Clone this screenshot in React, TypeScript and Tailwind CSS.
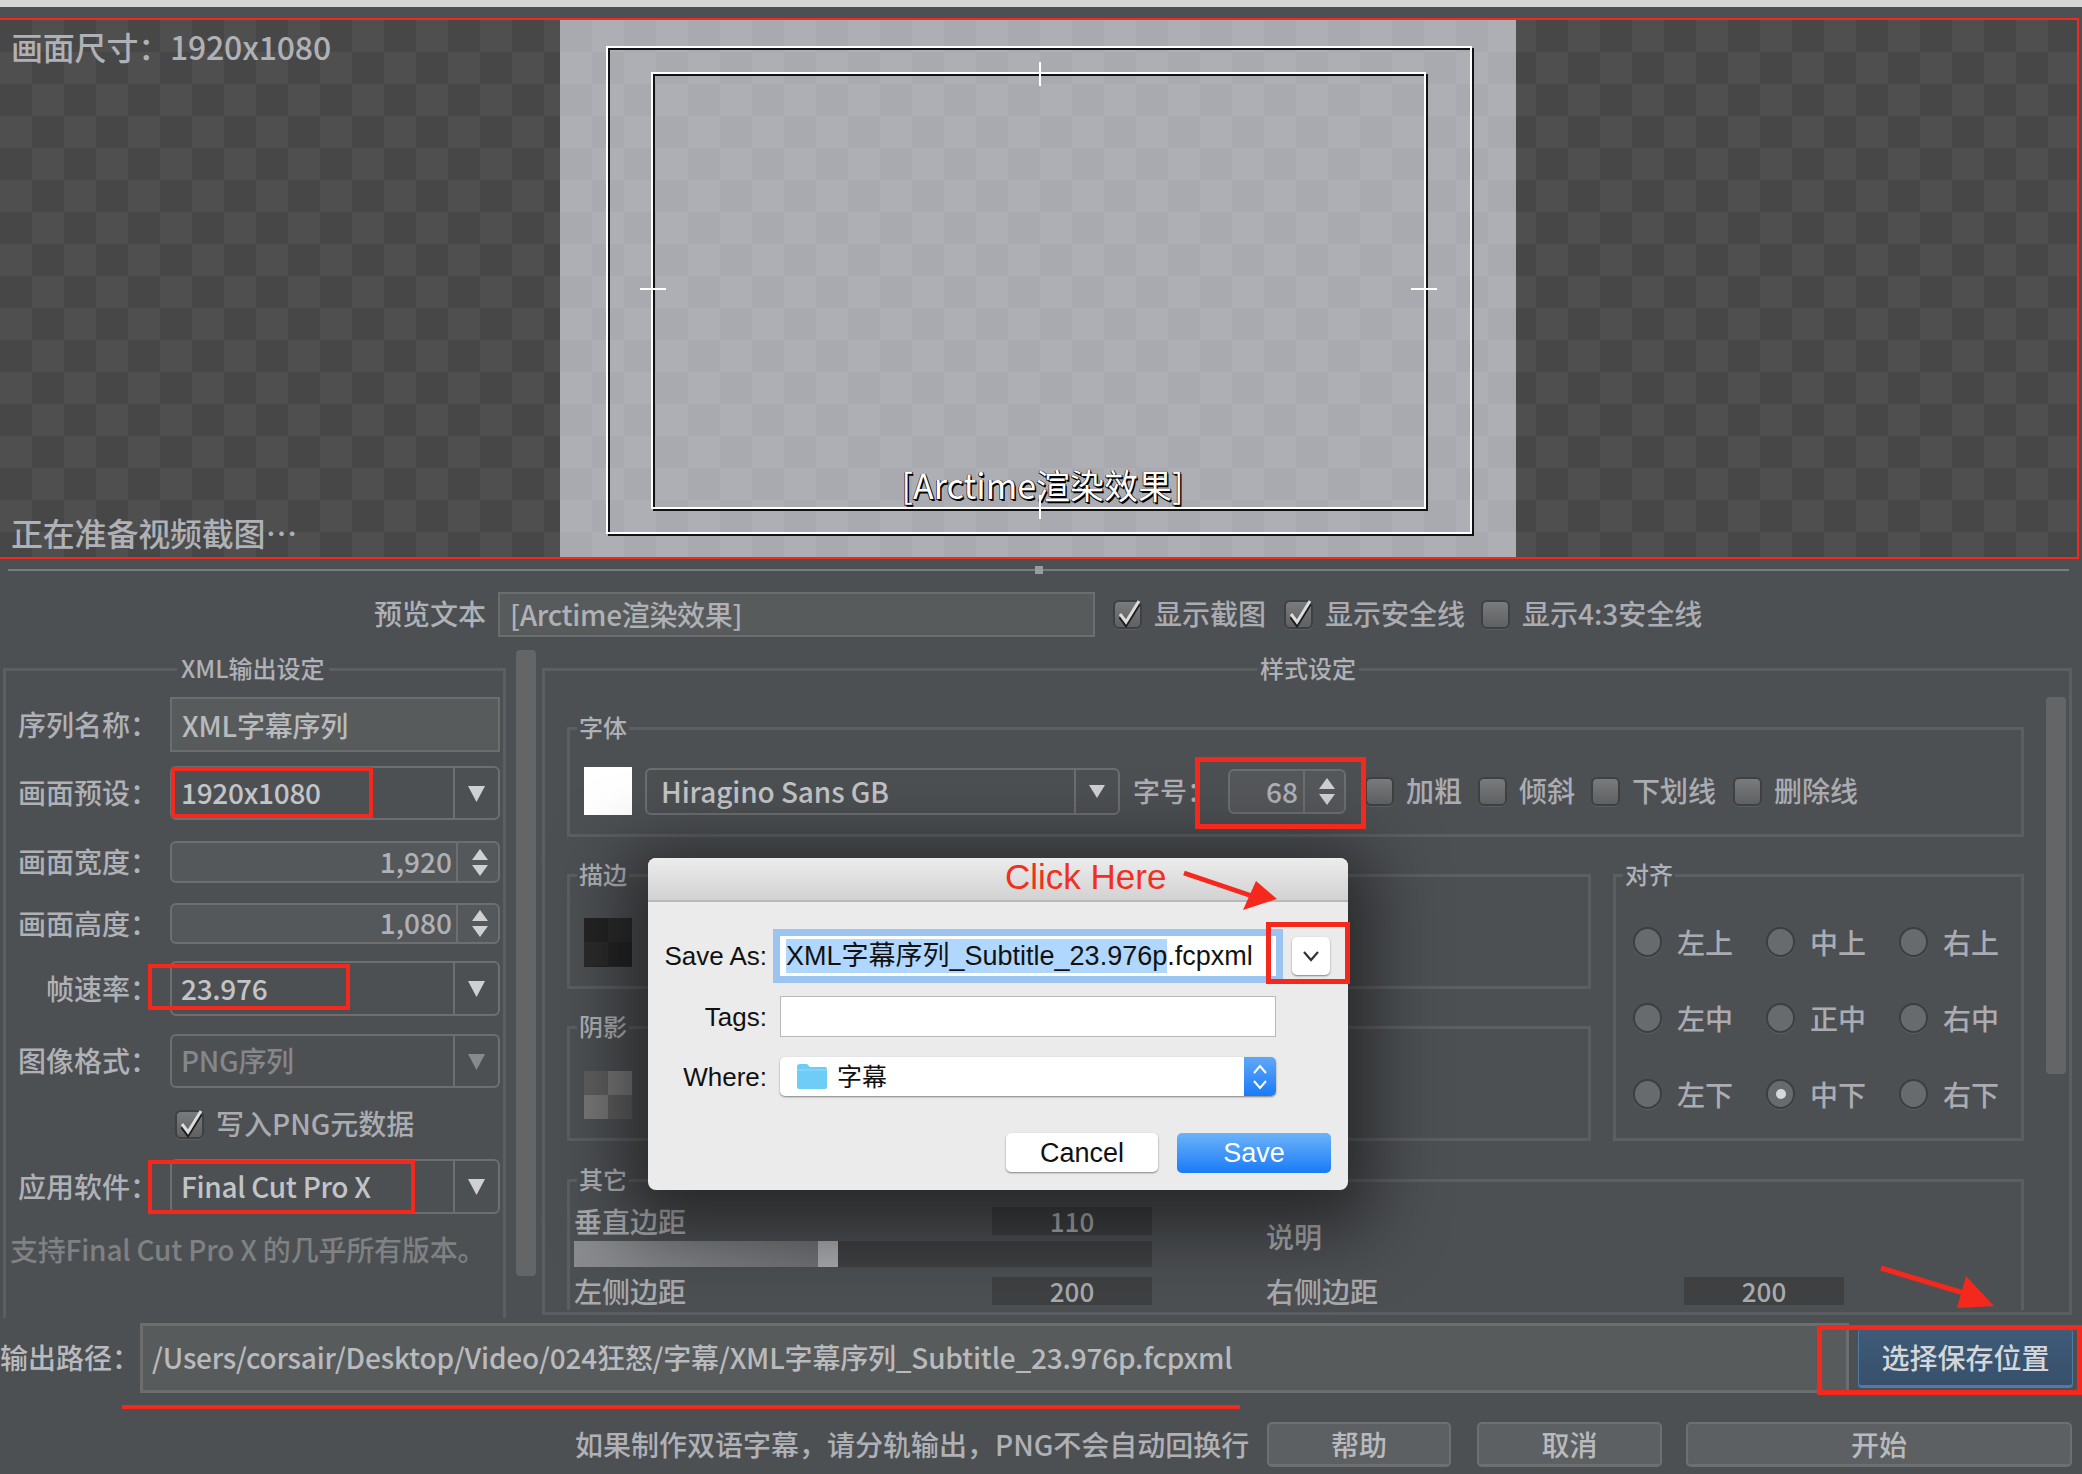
import React from "react";

const Tri = ({ up = false, dim = false, w = 17, h = 16 }: { up?: boolean; dim?: boolean; w?: number; h?: number }) => (
  <svg width={w} height={h} viewBox="0 0 20 17" preserveAspectRatio="none">
    <polygon points={up ? "10,0 20,17 0,17" : "0,0 20,0 10,17"} fill={dim ? "#87898b" : "#cfd0d2"} />
  </svg>
);

const Combo = ({ value, dim = false, h = "h-[54px]" }: { value: string; dim?: boolean; h?: string }) => (
  <div className={`flex w-[330px] ${h} rounded-[6px] border-2 border-[#6c6e70]`}>
    <div className={`flex-1 pl-[9px] pb-[2px] flex items-center text-[28px] leading-[34px] tracking-[-0.3px] ${dim ? "text-[#85878a]" : "text-[#c3c4c7]"}`}>{value}</div>
    <div className="w-[45px] border-l-2 border-[#6c6e70] flex items-center justify-center pt-[1px]">
      <Tri dim={dim} />
    </div>
  </div>
);

const Spin = ({ value, h = "h-[42px]" }: { value: string; h?: string }) => (
  <div className={`flex w-[330px] ${h} rounded-[6px] border-2 border-[#6c6e70] bg-[#55585a]`}>
    <div className="flex-1 pr-[4px] pb-[3px] flex items-center justify-end text-[28px] leading-[34px] text-[#b0b1b6]">{value}</div>
    <div className="w-[42px] pl-[4px] border-l-2 border-[#6c6e70] flex flex-col items-center justify-center gap-[5px]">
      <Tri up w={16} h={11} />
      <Tri w={16} h={11} />
    </div>
  </div>
);

const Row = ({ label, children, mt }: { label: string; children: React.ReactNode; mt: string }) => (
  <div className={`flex items-center ${mt}`}>
    <div className="w-[152px] mr-[12px] pb-[2px] text-right text-[28px] leading-none text-[#b0b1b6]">{label}</div>
    {children}
  </div>
);

const Check = ({ label, checked = false, ml = "" }: { label: string; checked?: boolean; ml?: string }) => (
  <div className={`flex items-center gap-[12px] ${ml}`}>
    <div className="relative shrink-0 w-[29px] h-[29px] rounded-[6px] border-2 border-[#3e4042] bg-[linear-gradient(#7a7b7c,#5f6061)] shadow-[0_1px_0_#5c5e60]">
      {checked && (
        <svg className="absolute -left-[1px] -top-[4px]" width="30" height="30" viewBox="0 0 30 30">
          <path d="M6 17 L12 25 L25 4" fill="none" stroke="#1c1c1c" strokeWidth="3.5" transform="translate(0 2)" />
          <path d="M6 16 L12 24 L25 3" fill="none" stroke="#dcdcdc" strokeWidth="3" />
        </svg>
      )}
    </div>
    <span className="pb-[3px] text-[28px] leading-none text-[#abacb2] whitespace-nowrap">{label}</span>
  </div>
);

const Radio = ({ label, on = false }: { label: string; on?: boolean }) => (
  <div className="flex shrink-0 items-center w-[133px] gap-[15px]">
    <div className="w-[29px] h-[30px] rounded-full border-2 border-[#3c3e41] bg-[#686b6e] flex items-center justify-center shadow-[0_1px_0_#5c5e60]">
      {on && <div className="w-[10px] h-[10px] rounded-full bg-[#d8d8d8]" />}
    </div>
    <span className="text-[28px] leading-none text-[#abacb2]">{label}</span>
  </div>
);

const Group = ({ legend, className, children }: { legend: string; className: string; children?: React.ReactNode }) => (
  <div className={`relative border-[3px] border-[#5c5f62] ${className}`}>
    <span className="absolute left-[7px] -top-[20px] px-[2px] bg-[#4d5053] text-[24px] leading-[34px] text-[#b0b1b6]">{legend}</span>
    {children}
  </div>
);

const Val = ({ v }: { v: string }) => (
  <div className="w-[160px] h-[28px] bg-[#3e4042] flex items-center justify-center text-[26px] leading-[28px] text-[#a9aaad]">{v}</div>
);

const Btn = ({ label, w, ml = "" }: { label: string; w: string; ml?: string }) => (
  <div className={`${w} ${ml} h-[45px] rounded-[5px] border-2 border-[#6d6f71] border-b-[3px] bg-[#5d6062] flex items-center justify-center text-[28px] leading-[34px] text-[#b9babd]`}>{label}</div>
);

const Frame = "border-2 border-white shadow-[2px_2px_0_#111,inset_2px_2px_0_#111]";

export default function App() {
  return (
    <div className="relative w-[2082px] h-[1474px] overflow-hidden bg-[#4d5053] font-medium font-['Noto_Sans_CJK_SC',sans-serif]">
      <div className="h-[7px] bg-[#d6d6d6]" />
      <div className="h-[11px]" />

      {/* preview */}
      <div className="flex w-[2079px] h-[541px] border-y-2 border-r-2 border-[#f5281e] bg-[conic-gradient(#4f4f4f_25%,#474747_0_50%,#4f4f4f_0_75%,#474747_0)] bg-size-[64px_64px]">
        <div className="w-[560px] flex flex-col justify-between pl-[11px] pt-[6px] pb-[5px] text-[32px] leading-[40px] tracking-[-0.2px] text-[#b0b1b6]">
          <div>画面尺寸：1920x1080</div>
          <div>正在准备视频截图…</div>
        </div>
        <div className="w-[956px] pl-[46px] pt-[26px] bg-[conic-gradient(#aeafb4_25%,#a9aab0_0_50%,#aeafb4_0_75%,#a9aab0_0)] bg-size-[64px_64px]">
          <div className={`w-[866px] h-[488px] pl-[43px] pt-[24px] ${Frame}`}>
            <div className={`relative w-[775px] h-[437px] flex flex-col justify-end items-center ${Frame}`}>
              <span className="absolute left-[386px] -top-[12px] w-[2px] h-[24px] bg-white" />
              <span className="absolute left-[386px] -bottom-[12px] w-[2px] h-[24px] bg-white" />
              <span className="absolute -left-[13px] top-[214px] w-[26px] h-[2px] bg-white" />
              <span className="absolute -right-[13px] top-[214px] w-[26px] h-[2px] bg-white" />
              <span className="ml-[8px] text-[34px] leading-[44px] font-normal text-white [text-shadow:1.5px_1.5px_0_#000,-0.5px_-0.5px_0_#222,1px_-0.5px_0_#222,-0.5px_1px_0_#222]">[Arctime渲染效果]</span>
            </div>
          </div>
        </div>
        <div className="flex-1" />
      </div>

      {/* splitter */}
      <div className="relative h-[33px] pt-[10px] pl-[8px]">
        <div className="w-[2061px] h-[2px] bg-[#7a7c7f]" />
        <div className="absolute left-[1035px] top-[7px] w-[8px] h-[8px] bg-[#9a9b9d]" />
      </div>

      {/* preview text */}
      <div className="flex items-center h-[45px]">
        <div className="w-[486px] pb-[3px] text-right text-[28px] leading-none text-[#b0b1b6]">预览文本</div>
        <div className="ml-[12px] w-[597px] h-[45px] border-2 border-[#6b6d6f] bg-[#585b5c] pl-[10px] pb-[2px] flex items-center text-[28px] leading-[34px] tracking-[-0.3px] text-[#b0b1b6]">[Arctime渲染效果]</div>
        <Check label="显示截图" checked ml="ml-[18px]" />
        <Check label="显示安全线" checked ml="ml-[18px]" />
        <Check label="显示4:3安全线" ml="ml-[16px]" />
      </div>

      {/* main */}
      <div className="flex h-[668px] mt-[13px] items-start">
        {/* left group */}
        <div className="relative ml-[3px] mt-[18px] w-[503px] h-[650px] border-x-[3px] border-t-[3px] border-[#5c5f62]">
          <span className="absolute left-[171px] -top-[20px] px-[4px] bg-[#4d5053] text-[24px] leading-[34px] text-[#b0b1b6] whitespace-nowrap">XML输出设定</span>
          <Row label="序列名称：" mt="mt-[26px]">
            <div className="w-[330px] h-[55px] border-2 border-[#6b6d6f] bg-[#585b5c] pl-[10px] flex items-center text-[28px] leading-[34px] tracking-[-0.2px] text-[#b9babd]">XML字幕序列</div>
          </Row>
          <Row label="画面预设：" mt="mt-[14px]"><Combo value="1920x1080" /></Row>
          <Row label="画面宽度：" mt="mt-[21px]"><Spin value="1,920" /></Row>
          <Row label="画面高度：" mt="mt-[20px]"><Spin value="1,080" h="h-[41px]" /></Row>
          <Row label="帧速率：" mt="mt-[17px]"><Combo value="23.976" h="h-[55px]" /></Row>
          <Row label="图像格式：" mt="mt-[18px]"><Combo value="PNG序列" dim /></Row>
          <div className="mt-[21px] ml-[169px]"><Check label="写入PNG元数据" checked /></div>
          <Row label="应用软件：" mt="mt-[19px]"><Combo value="Final Cut Pro X" h="h-[55px]" /></Row>
          <div className="mt-[15px] ml-[4px] text-[28px] leading-[40px] tracking-[-0.2px] text-[#7f8183] whitespace-nowrap">支持Final Cut Pro X 的几乎所有版本。</div>
        </div>

        {/* left scroll */}
        <div className="ml-[10px] w-[20px] h-[626px] rounded-[4px] bg-[#646566]" />

        {/* right group */}
        <div className="relative ml-[6px] mt-[18px] w-[1530px] h-[647px] border-[3px] border-[#5c5f62]">
          <span className="absolute left-[712px] -top-[20px] px-[3px] bg-[#4d5053] text-[24px] leading-[34px] text-[#b0b1b6]">样式设定</span>
          <div className="flex items-start">
            <div className="ml-[22px] w-[1457px]">
              <Group legend="字体" className="mt-[56px] h-[110px] pt-[18px] flex items-center">
                <div className="ml-[14px] w-[48px] h-[48px] bg-white" />
                <div className="ml-[13px] w-[475px] h-[47px] flex rounded-[6px] border-2 border-[#6c6e70]">
                  <div className="flex-1 pl-[14px] flex items-center text-[28px] leading-[34px] tracking-[-0.1px] text-[#c3c4c7]">Hiragino Sans GB</div>
                  <div className="w-[44px] border-l-2 border-[#6c6e70] flex items-center justify-center"><Tri w={16} h={13} /></div>
                </div>
                <div className="ml-[13px] w-[84px] text-[27px] leading-[34px] text-[#b0b1b6]">字号：</div>
                <div className="ml-[11px] w-[118px] h-[45px] flex rounded-[6px] border-2 border-[#6c6e70] bg-[#55585a]">
                  <div className="flex-1 pr-[5px] flex items-center justify-end text-[28px] leading-[34px] text-[#b0b1b6]">68</div>
                  <div className="w-[41px] pl-[4px] border-l-2 border-[#6c6e70] flex flex-col items-center justify-center gap-[5px]">
                    <Tri up w={16} h={11} />
                    <Tri w={16} h={11} />
                  </div>
                </div>
                <Check label="加粗" ml="ml-[19px]" />
                <Check label="倾斜" ml="ml-[16px]" />
                <Check label="下划线" ml="ml-[16px]" />
                <Check label="删除线" ml="ml-[17px]" />
              </Group>
              <div className="flex mt-[37px]">
                <div className="w-[1024px]">
                  <Group legend="描边" className="h-[115px]">
                    <div className="ml-[14px] mt-[41px] w-[48px] h-[49px] bg-[conic-gradient(#2b2b2b_25%,#242424_0_50%,#2b2b2b_0_75%,#242424_0)] bg-size-[48px_48px]" />
                  </Group>
                  <Group legend="阴影" className="mt-[37px] h-[115px]">
                    <div className="ml-[14px] mt-[42px] w-[48px] h-[48px] bg-[conic-gradient(#777_25%,#5e5e5e_0_50%,#777_0_75%,#5e5e5e_0)] bg-size-[48px_48px]" />
                  </Group>
                </div>
                <Group legend="对齐" className="ml-[22px] w-[411px] h-[267px] pl-[17px] pt-[50px]">
                  <div className="flex"><Radio label="左上" /><Radio label="中上" /><Radio label="右上" /></div>
                  <div className="flex mt-[46px]"><Radio label="左中" /><Radio label="正中" /><Radio label="右中" /></div>
                  <div className="flex mt-[46px]"><Radio label="左下" /><Radio label="中下" on /><Radio label="右下" /></div>
                </Group>
              </div>
              <div className="relative mt-[38px] w-[1457px] h-[131px] border-x-[3px] border-t-[3px] border-[#5c5f62] flex">
                <span className="absolute left-[7px] -top-[20px] px-[2px] bg-[#4d5053] text-[24px] leading-[34px] text-[#b0b1b6]">其它</span>
                <div className="ml-[4px] w-[578px] pt-[25px]">
                  <div className="flex justify-between items-center text-[28px] leading-[28px] text-[#a9aaad]"><span>垂直边距</span><Val v="110" /></div>
                  <div className="mt-[6px] h-[26px] bg-[#3e4042] flex">
                    <div className="w-[244px] bg-[linear-gradient(90deg,#8a8c90,#6e7073)]" />
                    <div className="w-[20px] bg-[#a8a9ae]" />
                  </div>
                  <div className="mt-[10px] flex justify-between items-center text-[28px] leading-[28px] text-[#a9aaad]"><span>左侧边距</span><Val v="200" /></div>
                </div>
                <div className="ml-[114px] w-[578px] pt-[34px] text-[28px] text-[#a9aaad]">
                  <div className="leading-[40px]">说明</div>
                  <div className="mt-[21px] flex justify-between items-center leading-[28px]"><span>右侧边距</span><Val v="200" /></div>
                </div>
              </div>
            </div>
            <div className="ml-[22px] mt-[26px] w-[20px] h-[377px] rounded-[4px] bg-[#646566]" />
          </div>
        </div>
      </div>

      {/* output */}
      <div className="flex items-center h-[70px] mt-[5px]">
        <div className="w-[140px] pb-[3px] text-[28px] leading-none text-[#b9babd] whitespace-nowrap">输出路径：</div>
        <div className="w-[1709px] h-[70px] border-[3px] border-[#6b6d6f] bg-[#585b5c] pl-[9px] pb-[3px] flex items-center text-[28px] leading-[34px] tracking-[-0.2px] text-[#b9babd] whitespace-nowrap">/Users/corsair/Desktop/Video/024狂怒/字幕/XML字幕序列_Subtitle_23.976p.fcpxml</div>
        <div className="ml-[9px] w-[215px] h-[59px] rounded-[4px] border-b-[3px] border-x border-[#4f7ba8] bg-[linear-gradient(#3f5b78,#37506b)] flex items-center justify-center text-[28px] leading-[34px] text-[#d5d6d9]">选择保存位置</div>
      </div>

      {/* bottom */}
      <div className="flex items-center mt-[29px] pl-[575px]">
        <div className="w-[692px] pb-[2px] text-[28px] leading-none text-[#b0b1b6] whitespace-nowrap">如果制作双语字幕，请分轨输出，PNG不会自动回换行</div>
        <Btn label="帮助" w="w-[184px]" />
        <Btn label="取消" w="w-[185px]" ml="ml-[26px]" />
        <Btn label="开始" w="w-[386px]" ml="ml-[24px]" />
      </div>

      {/* dialog */}
      <div className="absolute left-[648px] top-[858px] w-[700px] h-[332px] rounded-[8px] bg-[#ebebeb] shadow-[0_16px_70px_24px_rgba(0,0,0,0.5)] font-normal font-['Liberation_Sans','Noto_Sans_CJK_SC',sans-serif] text-[27px] leading-[34px] text-[#111]">
        <div className="h-[44px] rounded-t-[8px] border-b-2 border-[#b9b9b9] bg-[linear-gradient(#ececec,#d2d2d2)]" />
        <div className="mt-[34px] flex items-center h-[40px]">
          <div className="w-[119px] text-right text-[26px]">Save As:</div>
          <div className="ml-[13px] w-[496px] h-[40px] bg-white pl-[6px] flex items-center shadow-[0_0_0_7px_#9cc4f0] whitespace-nowrap">
            <span className="bg-[#b0d7ff] leading-[34px]">XML字幕序列_Subtitle_23.976p</span><span>.fcpxml</span>
          </div>
          <div className="ml-[16px] w-[38px] h-[38px] rounded-[5px] bg-white shadow-[0_1px_2px_rgba(0,0,0,0.45)] flex items-center justify-center">
            <svg width="18" height="12" viewBox="0 0 18 12"><path d="M2 2 L9 10 L16 2" fill="none" stroke="#333" strokeWidth="2.2" /></svg>
          </div>
        </div>
        <div className="mt-[20px] flex items-center h-[41px]">
          <div className="w-[119px] text-right text-[26px]">Tags:</div>
          <div className="ml-[13px] w-[496px] h-[41px] bg-white border border-[#b9b9b9]" />
        </div>
        <div className="mt-[20px] flex items-center h-[39px]">
          <div className="w-[119px] text-right text-[26px]">Where:</div>
          <div className="ml-[13px] w-[496px] h-[39px] rounded-[5px] bg-white shadow-[0_1px_2px_rgba(0,0,0,0.45)] flex items-center pl-[17px]">
            <svg width="30" height="25" viewBox="0 0 30 25">
              <path d="M0 3 Q0 0 3 0 H10 L13 3 H28 Q30 3 30 5 V23 Q30 25 28 25 H2 Q0 25 0 23 Z" fill="#6fccf7" />
              <path d="M0 6 H30" stroke="#9adcf9" strokeWidth="1" />
            </svg>
            <span className="ml-[10px] flex-1 text-[25px]">字幕</span>
            <div className="w-[32px] h-[39px] rounded-r-[5px] bg-[linear-gradient(#5fa8fa,#1a7bf6)] flex flex-col items-center justify-center gap-[4px]">
              <svg width="16" height="11" viewBox="0 0 16 11"><path d="M2 9 L8 2 L14 9" fill="none" stroke="#fff" strokeWidth="2" /></svg>
              <svg width="16" height="11" viewBox="0 0 16 11"><path d="M2 2 L8 9 L14 2" fill="none" stroke="#fff" strokeWidth="2" /></svg>
            </div>
          </div>
        </div>
        <div className="mt-[37px] flex justify-end pr-[17px]">
          <div className="w-[152px] h-[39px] rounded-[5px] bg-white shadow-[0_1px_2px_rgba(0,0,0,0.45)] flex items-center justify-center">Cancel</div>
          <div className="ml-[19px] w-[154px] h-[40px] rounded-[5px] bg-[linear-gradient(#6cb3fa,#1a7bf6)] flex items-center justify-center text-white">Save</div>
        </div>
      </div>

      {/* annotations */}
      <div className="absolute left-[1005px] top-[855px] text-[35px] leading-[44px] font-normal text-[#f03020] font-['Liberation_Sans',sans-serif] whitespace-nowrap">Click Here</div>
      <svg className="absolute left-[1180px] top-[865px]" width="105" height="50" viewBox="0 0 105 50">
        <path d="M4 8 L75 32" stroke="#f5281e" strokeWidth="5" />
        <polygon points="97,34 63,45 76,16" fill="#f5281e" />
      </svg>
      <svg className="absolute left-[1875px] top-[1262px]" width="125" height="50" viewBox="0 0 125 50">
        <path d="M6 6 L92 32" stroke="#f5281e" strokeWidth="5" />
        <polygon points="119,44 82,46 91,14" fill="#f5281e" />
      </svg>
      <div className="absolute left-[171px] top-[767px] w-[202px] h-[51px] border-[4px] border-[#f5281e]" />
      <div className="absolute left-[148px] top-[964px] w-[202px] h-[46px] border-[4px] border-[#f5281e]" />
      <div className="absolute left-[148px] top-[1160px] w-[267px] h-[54px] border-[4px] border-[#f5281e]" />
      <div className="absolute left-[1195px] top-[757px] w-[171px] h-[72px] border-[5px] border-[#f5281e]" />
      <div className="absolute left-[1266px] top-[922px] w-[84px] h-[62px] border-[5px] border-[#f5281e]" />
      <div className="absolute left-[1817px] top-[1325px] w-[265px] h-[70px] border-[5px] border-[#f5281e]" />
      <div className="absolute left-[122px] top-[1405px] w-[1118px] h-[4px] bg-[#f5281e]" />
    </div>
  );
}
